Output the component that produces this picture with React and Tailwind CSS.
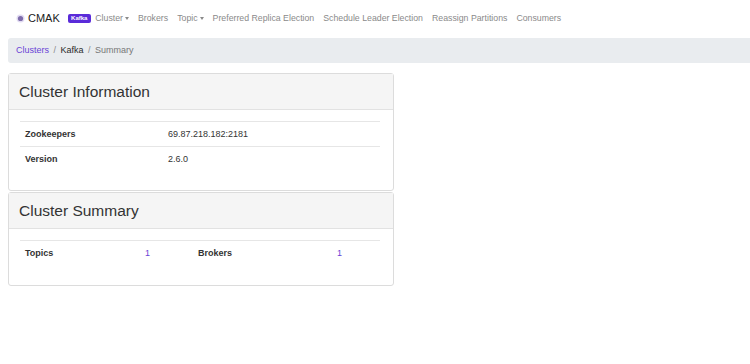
import React from 'react';

const navLinks = [
  { label: 'Cluster', caret: true },
  { label: 'Brokers' },
  { label: 'Topic', caret: true },
  { label: 'Preferred Replica Election' },
  { label: 'Schedule Leader Election' },
  { label: 'Reassign Partitions' },
  { label: 'Consumers' },
];

function Caret() {
  return <span className="ml-[2px] inline-block h-0 w-0 border-x-[2.5px] border-t-[3px] border-x-transparent border-t-[#8a8a8a]" />;
}

function Panel({ title, children }) {
  return (
    <div className="rounded-[3px] border border-[#dcdcdc] bg-white">
      <div className="flex h-[36px] items-center border-b border-[#e2e2e2] bg-[#f5f5f5] pl-[10px] text-[15.5px] text-[#333]">
        {title}
      </div>
      <div className="pb-[19px] pl-[11px] pr-[13px] pt-[11px]">{children}</div>
    </div>
  );
}

export default function App() {
  return (
    <div className="h-[364px] overflow-hidden bg-white font-['Liberation_Sans',Arial,sans-serif] text-[#333]">
      {/* navbar */}
      <div className="flex h-[37px] items-center pl-[16px]">
        <svg width="9" height="9" viewBox="0 0 9 9" className="mr-[3px]">
          <circle cx="4.5" cy="4.5" r="4" fill="#e2dcf2" />
          <circle cx="4.5" cy="4.5" r="2.6" fill="#7d6cab" />
        </svg>
        <span className="text-[11px] text-[#222]">CMAK</span>
        <span className="ml-[8px] flex h-[9px] w-[23px] items-center justify-center rounded-[2px] bg-[#5a2bd9] text-[6px] font-bold text-white">
          Kafka
        </span>
        <div className="flex items-center">
          {navLinks.map((l) => (
            <span key={l.label} className="flex items-center px-[4.5px] text-[8.75px] text-[#8a8a8a]">
              {l.label}
              {l.caret && <Caret />}
            </span>
          ))}
        </div>
      </div>

      {/* breadcrumb */}
      <div className="ml-[8px] mt-[1px] flex h-[25px] items-center rounded-l-[3px] bg-[#e9ecef] pl-[8px] text-[9px]">
        <span className="text-[#6a43d6]">Clusters</span>
        <span className="px-[4.5px] text-[#8a8a8a]">/</span>
        <span className="text-[#2a2a2a]">Kafka</span>
        <span className="px-[4.5px] text-[#8a8a8a]">/</span>
        <span className="text-[#777]">Summary</span>
      </div>

      <div className="ml-[8px] mt-[10px] w-[386px]">
        <Panel title="Cluster Information">
          <div className="text-[9px]">
            <div className="flex h-[25px] items-center border-t border-[#e6e6e6] pt-[1px]">
              <span className="w-[143px] pl-[5px] font-bold">Zookeepers</span>
              <span className="pl-[5px]">69.87.218.182:2181</span>
            </div>
            <div className="flex h-[25px] items-center border-t border-[#e6e6e6] pt-[1px]">
              <span className="w-[143px] pl-[5px] font-bold">Version</span>
              <span className="pl-[5px]">2.6.0</span>
            </div>
          </div>
        </Panel>
        <div className="mt-[1px]">
          <Panel title="Cluster Summary">
            <div className="flex h-[26px] items-center border-t border-[#e6e6e6] pt-[1px] text-[9px]">
              <span className="w-[120px] pl-[5px] font-bold">Topics</span>
              <span className="w-[53px] pl-[5px] text-[#6a43d6]">1</span>
              <span className="w-[139px] pl-[5px] font-bold">Brokers</span>
              <span className="pl-[5px] text-[#6a43d6]">1</span>
            </div>
          </Panel>
        </div>
      </div>
    </div>
  );
}
